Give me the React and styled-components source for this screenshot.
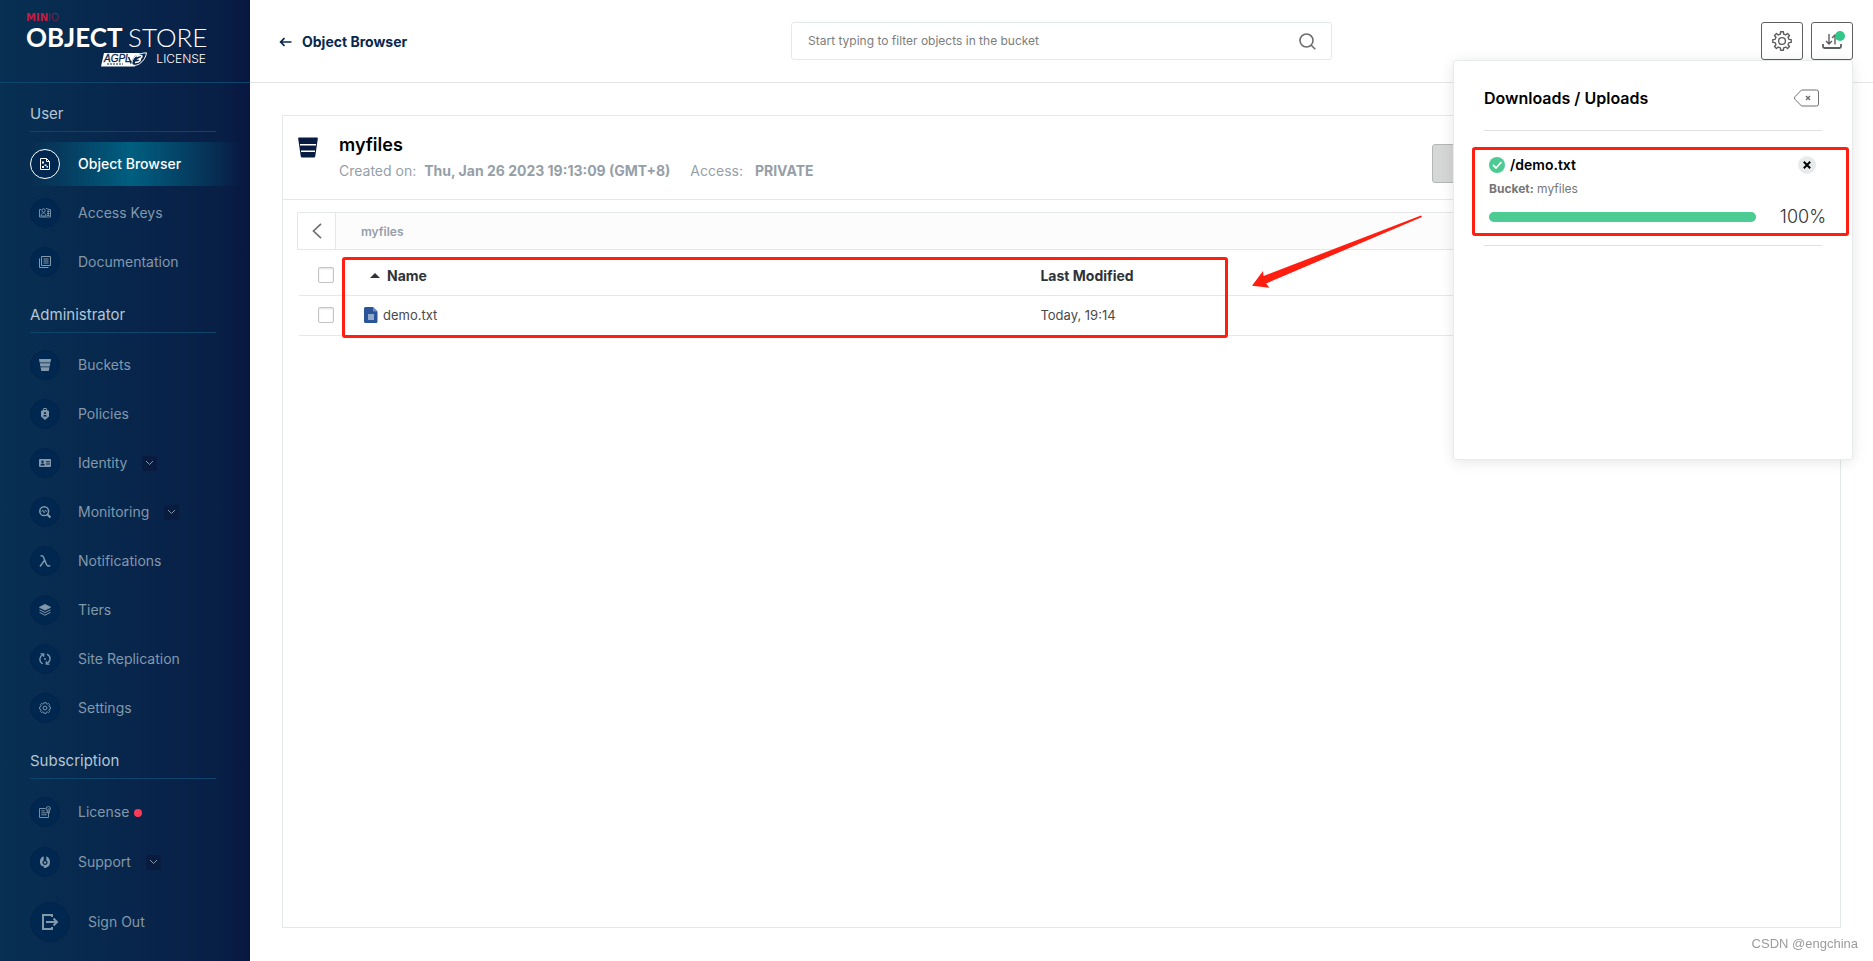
import React from 'react';
import styled, { createGlobalStyle } from 'styled-components';

const GlobalStyle = createGlobalStyle`
  * {
    box-sizing: border-box;
  }

  body {
    margin: 0;
    background-color: #ffffff;
    font-family: Inter, 'Liberation Sans', sans-serif;
    font-size: 14px;
    color: #000000;
  }

  button,
  input {
    font-family: inherit;
  }
`;

const Page = styled.div`
  display: flex;
  min-height: 100vh;
`;

/* Sidebar */

const SideBar = styled.aside`
  flex: 0 0 250px;
  min-width: 0;
  background: linear-gradient(90deg, #073052 0%, #08254b 55%, #081f46 88%, #081740 100%);
`;

const LogoArea = styled.div`
  display: flex;
  flex-direction: column;
  height: 83px;
  padding: 13px 44px 0 26px;
  border-bottom: 1px solid #0f446c;
  color: #ffffff;
`;

const Brand = styled.div`
  font-family: 'DejaVu Sans', sans-serif;
  font-size: 10px;
  line-height: 10px;
  font-weight: 700;
  color: #c51c3f;

  span {
    font-weight: 200;
  }
`;

const Product = styled.div`
  font-family: Lato, 'Liberation Sans', sans-serif;
  font-size: 26px;
  line-height: 28px;
  font-weight: 700;
  white-space: nowrap;

  span {
    font-weight: 300;
  }
`;

const LicenseLine = styled.div`
  display: flex;
  align-items: center;
  justify-content: flex-end;
  gap: 9px;
  height: 16px;
  font-size: 12px;
  line-height: 14px;
  font-weight: 300;
`;

const Nav = styled.nav`
  display: flex;
  flex-direction: column;
`;

const NavGroup = styled.div`
  display: flex;
  flex-direction: column;
  gap: 5px;
`;

const NavTitle = styled.h2`
  height: 49px;
  margin: 0 34px 5px 30px;
  padding-top: 21px;
  border-bottom: 1px solid #0f446c;
  color: #b4c6d4;
  font-size: 15px;
  line-height: 20px;
  font-weight: 400;
`;

const NavItem = styled.a`
  display: flex;
  align-items: center;
  height: ${(props) => props.$height || 44}px;
  padding-left: 30px;
  margin-top: ${(props) => (props.$large ? 7 : 0)}px;
  color: ${(props) => (props.$active ? '#ffffff' : '#8298ab')};
  font-size: 14px;
  line-height: 20px;
  font-weight: ${(props) => (props.$active ? 500 : 400)};
  text-decoration: none;
  background: ${(props) =>
    props.$active
      ? 'linear-gradient(90deg, transparent 12%, #005f80 52%, transparent 96%)'
      : 'none'};
`;

const IconCircle = styled.span`
  display: flex;
  align-items: center;
  justify-content: center;
  width: ${(props) => (props.$large ? 40 : 30)}px;
  height: ${(props) => (props.$large ? 40 : 30)}px;
  margin-right: 18px;
  border: 1px solid ${(props) => (props.$active ? '#ffffff' : '#04234a')};
  border-radius: 50%;
  background-color: #00274f;

  svg {
    width: ${(props) => (props.$large ? 18 : 12)}px;
    height: ${(props) => (props.$large ? 18 : 12)}px;
  }
`;

const Expand = styled.span`
  display: flex;
  align-items: center;
  justify-content: center;
  width: 15px;
  height: 15px;
  margin-left: 15px;
  border-radius: 2px;
  background-color: #0a1b40;
`;

const AlertDot = styled.span`
  width: 8px;
  height: 8px;
  margin: 2px 0 0 5px;
  border-radius: 50%;
  background-color: #ff3958;
`;

/* Header */

const Main = styled.main`
  display: flex;
  flex: 1;
  flex-direction: column;
  min-width: 0;
`;

const TopBar = styled.header`
  display: grid;
  grid-template-columns: repeat(3, 1fr);
  align-items: center;
  height: 83px;
  border-bottom: 1px solid #e5e5e5;
`;

const BackLink = styled.a`
  display: flex;
  align-items: center;
  gap: 10px;
  padding: 2px 0 0 29px;
  color: #07284f;
  font-weight: 700;
  line-height: 20px;
  text-decoration: none;
`;

const SearchBox = styled.label`
  display: flex;
  align-items: center;
  height: 38px;
  padding: 0 15px 0 16px;
  border: 1px solid #e5e8e8;
  border-radius: 3px;
`;

const SearchInput = styled.input`
  flex: 1;
  padding: 0;
  border: none;
  outline: none;
  background: none;
  font-size: 12px;
  line-height: 16px;

  &::placeholder {
    color: #7d7d7d;
    opacity: 1;
  }
`;

const TopActions = styled.div`
  position: relative;
  display: flex;
  justify-content: flex-end;
  gap: 8px;
  padding-right: 20px;
`;

const IconButton = styled.button`
  position: relative;
  display: flex;
  align-items: center;
  justify-content: center;
  width: 42px;
  height: 38px;
  padding: 0;
  border: 1px solid #5c5e60;
  border-radius: 3px;
  background-color: #ffffff;
  color: #5b5d5f;
`;

const ActiveBadge = styled.span`
  position: absolute;
  top: 8px;
  right: 7px;
  width: 10px;
  height: 10px;
  border-radius: 50%;
  background-color: #32c787;
`;

/* Transfers panel */

const TransferPanel = styled.section`
  position: absolute;
  top: 38px;
  right: 20px;
  z-index: 10;
  width: 400px;
  height: 400px;
  padding: 0 30px;
  border: 1px solid #e8ebeb;
  border-radius: 3px;
  background-color: #ffffff;
  box-shadow: 0 2px 14px rgba(0, 0, 0, 0.1);
`;

const PanelHead = styled.div`
  display: flex;
  align-items: center;
  justify-content: space-between;
  height: 70px;
  padding-top: 5px;
  border-bottom: 1px solid #e0e0e0;

  h3 {
    margin: 0;
    font-size: 16px;
    line-height: 20px;
    font-weight: 600;
  }
`;

const PlainButton = styled.button`
  display: flex;
  padding: 0;
  border: none;
  background: none;
  color: #707070;
  margin-right: 2px;
`;

const Transfer = styled.div`
  position: relative;
  height: 115px;
  padding: 24px 0 0 5px;
  border-bottom: 1px solid #e0e0e0;
`;

const TransferName = styled.div`
  display: flex;
  align-items: center;
  gap: 5px;
  padding-right: 6px;
  font-weight: 600;
  line-height: 20px;
`;

const RemoveButton = styled.button`
  display: flex;
  align-items: center;
  justify-content: center;
  width: 18px;
  height: 18px;
  margin-left: auto;
  padding: 0;
  border: none;
  border-radius: 50%;
  background-color: #e8ebeb;
  color: #000000;
`;

const TransferBucket = styled.div`
  margin-top: 5px;
  color: #767676;
  font-size: 12px;
  line-height: 18px;
`;

const ProgressRow = styled.div`
  display: flex;
  align-items: center;
  gap: 24px;
  height: 20px;
  margin: 9px -4px 0 0;
  color: #333333;
  font-size: 18px;
  line-height: 20px;
  font-weight: 300;
`;

const Track = styled.div`
  flex: 1;
  height: 10px;
  border-radius: 5px;
  background-color: #e8ebeb;
`;

const Fill = styled.div`
  height: 10px;
  border-radius: 5px;
  background-color: #4ccb92;
`;

/* Bucket card */

const Card = styled.section`
  position: relative;
  flex: 1;
  margin: 32px 32px 33px;
  border: 1px solid #e5e8e8;
`;

const CardHead = styled.div`
  display: flex;
  align-items: flex-start;
  height: 84px;
  padding: 17px 15px 0;
  border-bottom: 1px solid #e5e8e8;
`;

const BucketMark = styled.div`
  display: flex;
  width: 41px;
  padding-top: 4px;
`;

const BucketName = styled.h1`
  margin: 0;
  font-size: 18px;
  line-height: 24px;
  font-weight: 600;
`;

const BucketMeta = styled.div`
  display: flex;
  gap: 20px;
  margin-top: 4px;
  color: #969fa8;
  line-height: 20px;

  strong {
    margin-left: 8px;
    font-weight: 700;
  }
`;

const BucketActions = styled.div`
  display: flex;
  width: 393px;
  margin-left: auto;
  padding-top: 11px;
`;

const DisabledButton = styled.button`
  width: 110px;
  height: 39px;
  border: 1px solid #b5b7b7;
  border-radius: 3px;
  background-color: #d5d7d7;
`;

const CardBody = styled.div`
  padding: 12px 15px;
`;

const PathBar = styled.div`
  display: flex;
  align-items: center;
  height: 38px;
  border: 1px solid #e5e8e8;
  margin-left: -1px;
  background-color: #fcfcfc;
  color: #969fa8;
  font-size: 12px;
  font-weight: 600;
`;

const PathBack = styled.button`
  display: flex;
  align-items: center;
  justify-content: center;
  width: 38px;
  height: 36px;
  margin-right: 25px;
  padding: 0;
  border: none;
  border-right: 1px solid #e5e8e8;
  background-color: #ffffff;
  color: #707070;
`;

const TableWrap = styled.div`
  position: relative;
  padding-left: 1px;
`;

const Table = styled.table`
  width: 100%;
  table-layout: fixed;
  border-collapse: collapse;
  text-align: left;

  th {
    height: 45px;
    padding: 6px 0 0;
    border-bottom: 1px solid #e5e8e8;
    color: #2f3338;
    font-size: 14px;
    font-weight: 700;
  }

  td {
    height: 40px;
    padding: 0;
    border-bottom: 1px solid #e5e8e8;
    color: #4a4a4a;
    font-size: 13px;
  }
`;

const CheckColumn = styled.col`
  width: 65px;
`;

const NameColumn = styled.col`
  width: 44%;
`;

const Cell = styled.div`
  display: flex;
  align-items: center;
  gap: ${(props) => props.$gap || 0}px;
  padding-left: ${(props) => props.$indent || 0}px;
`;

const CheckBox = styled.input.attrs({ type: 'checkbox' })`
  appearance: none;
  width: 16px;
  height: 16px;
  margin: 0;
  border: 1px solid #c3c4c4;
  border-radius: 2px;
  background-color: #ffffff;
  box-shadow: inset 0 1px 2px rgba(0, 0, 0, 0.12);
`;

/* Marks drawn over the page */

const Highlight = styled.div`
  position: absolute;
  top: ${(props) => props.$top}px;
  left: ${(props) => props.$left}px;
  width: ${(props) => props.$width};
  height: ${(props) => props.$height}px;
  border: 3px solid #ff1e10;
  border-radius: 3px;
  pointer-events: none;
`;

const ArrowMark = styled.svg`
  position: absolute;
  top: 99px;
  right: 417px;
  width: 172px;
  height: 76px;
  pointer-events: none;
`;

const Watermark = styled.div`
  position: fixed;
  right: 15px;
  bottom: 8px;
  color: #9b9b9b;
  font-family: 'Liberation Sans', sans-serif;
  font-size: 13px;
  line-height: 18px;
`;

const gearPath = (c, outer, inner, teeth) => {
  const points = [];
  const step = (Math.PI * 2) / teeth;
  for (let i = 0; i < teeth; i += 1) {
    [
      [-0.3, inner],
      [-0.19, outer],
      [0.19, outer],
      [0.3, inner],
    ].forEach(([offset, r]) => {
      const a = (i + offset) * step;
      points.push(`${(c + r * Math.sin(a)).toFixed(2)} ${(c - r * Math.cos(a)).toFixed(2)}`);
    });
  }
  return `M${points.join('L')}Z`;
};

const icons = {
  browser: (
    <svg viewBox="0 0 12 12" fill="none" stroke="currentColor">
      <path d="M1.5.5h6l3 3v8h-9z" />
      <path d="M7.500.5v3h3" />
      <path d="M3 3.500h2v2H3zM3 8h2v2H3zM5.500 6.500h2v1.500h-2zM7.500 8h1.500v1.500H7.500z" fill="currentColor" stroke="none" />
    </svg>
  ),
  keys: (
    <svg viewBox="0 0 12 12" fill="none" stroke="currentColor" strokeWidth="0.9">
      <path d="M2 2.500H.5v7.500h11V2.500H10M7 1.500h1.500" />
      <circle cx="4.500" cy="3.500" r="1.700" />
      <path d="M2 9c0-2 1-3 2.500-3S7 7 7 9zM8 4.500h2.500M8 6.500h2.500M8 8.500h2.500M9.200 1.500v7" />
    </svg>
  ),
  docs: (
    <svg viewBox="0 0 12 12" fill="none" stroke="currentColor">
      <path d="M2.500.5h9v9h-9zM.5 2.500v9h9M4.500 3h5M4.500 5h5M4.500 7h5" />
    </svg>
  ),
  bucket: (
    <svg viewBox="0 0 12 12" fill="currentColor">
      <path d="M0 0h12l-.5 3.500H.5zM.8 4.300h10.400l-.5 3.200H1.300zM1.600 8.300h8.800L9.800 12H2.200z" />
    </svg>
  ),
  policy: (
    <svg viewBox="0 0 12 12" fill="currentColor" fillRule="evenodd">
      <path d="M4.200 2V.8C4.200.4 4.600 0 5 0h2c.4 0 .8.400.8.8V2L10 3v5.500L6 12 2 8.500V3zM5 1v1h2V1zM6 4a1.100 1.100 0 1 0 0 2.200A1.100 1.100 0 0 0 6 4zM4 8.600h4L7 6.900H5z" />
    </svg>
  ),
  identity: (
    <svg viewBox="0 0 12 12" fill="currentColor" fillRule="evenodd">
      <path d="M1 2h10a1 1 0 0 1 1 1v6a1 1 0 0 1-1 1H1a1 1 0 0 1-1-1V3a1 1 0 0 1 1-1zM3.500 3.500a1.200 1.200 0 1 0 0 2.400 1.200 1.200 0 0 0 0-2.400zM1.500 8.500h4.200c0-2.600-4.200-2.600-4.200 0zM7 4h4v.7H7zM7 5.700h4v.7H7zM7 7.400h4v.7H7z" />
    </svg>
  ),
  monitor: (
    <svg viewBox="0 0 12 12" fill="none" stroke="currentColor">
      <circle cx="5.200" cy="5.200" r="4.400" strokeWidth="1.500" />
      <path d="M2.500 6l1.500-2 1.200 3 1.300-3 1.300 2" strokeWidth="0.8" />
      <path d="M8 8l3.500 3.500" strokeWidth="2.200" />
    </svg>
  ),
  lambda: (
    <svg viewBox="0 0 12 12" fill="none" stroke="currentColor" strokeWidth="1.500">
      <path d="M1.500.8h1.200c1 0 1.400.500 1.800 1.400l3 7.300c.4 1 .9 1.500 1.800 1.500l2-.3M5.800 5L1 11.500" />
    </svg>
  ),
  tiers: (
    <svg viewBox="0 0 12 12" fill="none" stroke="currentColor">
      <path d="M6 .5l5.500 2.800L6 6 .5 3.300z" fill="currentColor" />
      <path d="M.5 5.800L6 8.600l5.500-2.800M.5 8.300L6 11.200l5.500-2.900" />
    </svg>
  ),
  replication: (
    <svg viewBox="0 0 12 12" fill="none" stroke="currentColor" strokeWidth="1.300">
      <path d="M3.800 10.800C-.5 8.500.2 3.500 4.200 1.500M8 1.200c4.400 2.300 3.800 7.300-.2 9.300" />
      <path d="M1.500.8h3.200v3M10.500 11.200H7.300v-3" />
      <circle cx="6" cy="6" r="0.9" fill="currentColor" stroke="none" />
    </svg>
  ),
  settings: (
    <svg viewBox="0 0 12 12" fill="none" stroke="currentColor">
      <path d={gearPath(6, 5.7, 4.6, 8)} />
      <circle cx="6" cy="6" r="1.900" />
    </svg>
  ),
  license: (
    <svg viewBox="0 0 12 12" fill="none" stroke="currentColor" strokeWidth="0.9">
      <path d="M6.500 2.500h-6v9h9V6M2.300 4.800h3.500M2.300 6.800h5.400M2.300 8.800h5.400" />
      <circle cx="9.300" cy="2.700" r="2.200" />
      <path d="M8.300 2.700l.8.800 1.300-1.500M8.300 5v2l1-.6 1 .6V5" />
    </svg>
  ),
  support: (
    <svg viewBox="0 0 12 12" fill="currentColor">
      <path d="M4.700.3C.2 1.600-.2 8 3.200 10.300L4.200 9.500 5 11.700c.5.400 1.500.400 2 0l3-1.800C12 6.500 11 1.500 7.300.3v3.900a2.600 2.600 0 1 1-2.600 0z" />
      <circle cx="6" cy="6.500" r="1.200" />
    </svg>
  ),
  signOut: (
    <svg viewBox="0 0 18 18" fill="none" stroke="currentColor" strokeWidth="2">
      <path d="M11 4V2H2v14h9v-2M5 9h11M12.500 5.500L16 9l-3.500 3.500" />
    </svg>
  ),
};

const navGroups = [
  {
    title: 'User',
    items: [
      { label: 'Object Browser', icon: 'browser', active: true },
      { label: 'Access Keys', icon: 'keys' },
      { label: 'Documentation', icon: 'docs' },
    ],
  },
  {
    title: 'Administrator',
    items: [
      { label: 'Buckets', icon: 'bucket' },
      { label: 'Policies', icon: 'policy' },
      { label: 'Identity', icon: 'identity', expandable: true },
      { label: 'Monitoring', icon: 'monitor', expandable: true },
      { label: 'Notifications', icon: 'lambda' },
      { label: 'Tiers', icon: 'tiers' },
      { label: 'Site Replication', icon: 'replication' },
      { label: 'Settings', icon: 'settings' },
    ],
  },
  {
    title: 'Subscription',
    items: [
      { label: 'License', icon: 'license', alert: true, height: 46 },
      { label: 'Support', icon: 'support', expandable: true },
      { label: 'Sign Out', icon: 'signOut', large: true, height: 52 },
    ],
  },
];

const files = [{ name: 'demo.txt', modified: 'Today, 19:14' }];

const transfers = [{ name: '/demo.txt', bucket: 'myfiles', progress: 100 }];

function AgplBadge() {
  return (
    <svg width="46" height="15" viewBox="0 0 46 15" aria-hidden="true">
      <path d="M3 1h36l-5 13.500H0z" fill="#ffffff" />
      <text
        x="3"
        y="10"
        fill="#0a284d"
        stroke="#0a284d"
        strokeWidth="0.3"
        fontFamily="Liberation Sans, sans-serif"
        fontSize="10"
        fontStyle="italic"
      >
        AGPL
      </text>
      <path d="M6 12h16" stroke="#0a284d" strokeDasharray="2 1" />
      <path d="M27.500 5l2.500 6 5-7" fill="none" stroke="#0a284d" strokeWidth="1.500" />
      <path
        d="M31 10.500C31.500 5 38 1 45.500.8c-.5 4-3 8.500-7 11-3.500 2.200-8 2.200-7.500-1.300z"
        fill="#0a284d"
        stroke="#ffffff"
      />
      <path d="M35.500 4.500c4-2 7-1 4.500 1.500l-2 1c3 .3 1 3.500-4 3.500" fill="none" stroke="#ffffff" strokeWidth="1.500" />
    </svg>
  );
}

function SideNav() {
  return (
    <SideBar>
      <LogoArea>
        <Brand>
          MIN<span>IO</span>
        </Brand>
        <Product>
          OBJECT <span>STORE</span>
        </Product>
        <LicenseLine>
          <AgplBadge />
          LICENSE
        </LicenseLine>
      </LogoArea>
      <Nav>
        {navGroups.map((group) => (
          <NavGroup key={group.title}>
            <NavTitle>{group.title}</NavTitle>
            {group.items.map((item) => (
              <NavItem
                key={item.label}
                href="#"
                $active={item.active}
                $large={item.large}
                $height={item.height}
              >
                <IconCircle $active={item.active} $large={item.large}>
                  {icons[item.icon]}
                </IconCircle>
                {item.label}
                {item.alert && <AlertDot />}
                {item.expandable && (
                  <Expand>
                    <svg width="9" height="6" viewBox="0 0 9 6" fill="none" stroke="currentColor">
                      <path d="M1 1l3.500 3.500L8 1" />
                    </svg>
                  </Expand>
                )}
              </NavItem>
            ))}
          </NavGroup>
        ))}
      </Nav>
    </SideBar>
  );
}

function Transfers() {
  return (
    <TransferPanel>
      <PanelHead>
        <h3>Downloads / Uploads</h3>
        <PlainButton aria-label="Clear completed">
          <svg width="26" height="18" viewBox="0 0 26 18" fill="none" stroke="currentColor">
            <path d="M7.500 1h15a2 2 0 0 1 2 2v12a2 2 0 0 1-2 2h-15L1.200 10.500a2 2 0 0 1 0-3z" />
            <path d="M12 7l4 4M16 7l-4 4" strokeWidth="1.500" />
          </svg>
        </PlainButton>
      </PanelHead>
      {transfers.map((item) => (
        <Transfer key={item.name}>
          <TransferName>
            <svg width="16" height="16" viewBox="0 0 16 16">
              <circle cx="8" cy="8" r="8" fill="#4ccb92" />
              <path d="M4 8l3 3 5.500-6" fill="none" stroke="#ffffff" strokeWidth="1.800" />
            </svg>
            {item.name}
            <RemoveButton aria-label="Remove">
              <svg width="8" height="8" viewBox="0 0 8 8" stroke="currentColor" strokeWidth="2">
                <path d="M.8.8l6.400 6.400M7.200.8L.8 7.200" />
              </svg>
            </RemoveButton>
          </TransferName>
          <TransferBucket>
            <strong>Bucket:</strong> {item.bucket}
          </TransferBucket>
          <ProgressRow>
            <Track>
              <Fill style={{ width: `${item.progress}%` }} />
            </Track>
            {item.progress}%
          </ProgressRow>
          <Highlight $top={16} $left={-12} $width="377px" $height={89} />
        </Transfer>
      ))}
    </TransferPanel>
  );
}

function Header() {
  return (
    <TopBar>
      <BackLink href="#">
        <svg width="13" height="10" viewBox="0 0 13 10" fill="none" stroke="currentColor" strokeWidth="1.700">
          <path d="M12.500 5H2M5.500 1.200L1.600 5l3.900 3.800" />
        </svg>
        Object Browser
      </BackLink>
      <SearchBox>
        <SearchInput
          type="text"
          aria-label="Filter objects"
          placeholder="Start typing to filter objects in the bucket"
        />
        <svg width="17" height="17" viewBox="0 0 17 17" fill="none" stroke="#6c6e70" strokeWidth="1.600">
          <circle cx="7.500" cy="7.500" r="6.500" />
          <path d="M12 12l4.300 4.300" />
        </svg>
      </SearchBox>
      <TopActions>
        <IconButton aria-label="Settings">
          <svg width="20" height="20" viewBox="0 0 20 20" fill="none" stroke="currentColor" strokeWidth="1.400">
            <path d={gearPath(10, 9.3, 7.1, 8)} strokeLinejoin="round" />
            <circle cx="10" cy="10" r="3.400" />
          </svg>
        </IconButton>
        <IconButton aria-label="Downloads and uploads">
          <svg width="20" height="16" viewBox="0 0 20 16" fill="none" stroke="currentColor" strokeWidth="1.400">
            <path d="M1 11v2.500a1.500 1.500 0 0 0 1.500 1.500h15a1.500 1.500 0 0 0 1.500-1.500V11" strokeWidth="1.800" />
            <path d="M7 1v10M4 8l3 3 3-3M13 11.500V2M10 5l3-3 3 3" />
          </svg>
          <ActiveBadge />
        </IconButton>
        <Transfers />
      </TopActions>
    </TopBar>
  );
}

function BucketCard() {
  return (
    <Card>
      <CardHead>
        <BucketMark>
          <svg width="20" height="21" viewBox="0 0 20 21">
            <path d="M1 .5h18a1 1 0 0 1 .8 1.200L17.300 19a1.500 1.500 0 0 1-1.500 1.500H4.200A1.500 1.500 0 0 1 2.700 19L.2 1.700A1 1 0 0 1 1 .5z" fill="#081c42" />
            <path d="M2 7.800h16M3 14.200h14" stroke="#ffffff" strokeWidth="1.500" />
          </svg>
        </BucketMark>
        <div>
          <BucketName>myfiles</BucketName>
          <BucketMeta>
            <span>
              Created on:<strong>Thu, Jan 26 2023 19:13:09 (GMT+8)</strong>
            </span>
            <span>
              Access: <strong>PRIVATE</strong>
            </span>
          </BucketMeta>
        </div>
        <BucketActions>
          <DisabledButton aria-label="Rewind" disabled />
        </BucketActions>
      </CardHead>
      <CardBody>
        <PathBar>
          <PathBack aria-label="Back">
            <svg width="10" height="16" viewBox="0 0 10 16" fill="none" stroke="currentColor" strokeWidth="1.700">
              <path d="M9 .8L1.500 8 9 15.200" />
            </svg>
          </PathBack>
          myfiles
        </PathBar>
        <TableWrap>
          <Table>
            <colgroup>
              <CheckColumn />
              <NameColumn />
              <col />
            </colgroup>
            <thead>
              <tr>
                <th>
                  <Cell $indent={19}>
                    <CheckBox aria-label="Select all" />
                  </Cell>
                </th>
                <th>
                  <Cell $indent={6} $gap={7}>
                    <svg width="10" height="5" viewBox="0 0 10 5">
                      <path d="M0 5l5-5 5 5z" fill="#2f3338" />
                    </svg>
                    Name
                  </Cell>
                </th>
                <th>
                  <Cell $indent={5}>Last Modified</Cell>
                </th>
              </tr>
            </thead>
            <tbody>
              {files.map((file) => (
                <tr key={file.name}>
                  <td>
                    <Cell $indent={19}>
                      <CheckBox aria-label={`Select ${file.name}`} />
                    </Cell>
                  </td>
                  <td>
                    <Cell $gap={5}>
                      <svg width="14" height="16" viewBox="0 0 14 16">
                        <path d="M1.500 0H9l4.500 4.500v10A1.500 1.500 0 0 1 12 16H1.500A1.500 1.500 0 0 1 0 14.500v-13A1.500 1.500 0 0 1 1.500 0z" fill="#2a5597" />
                        <path d="M9 0l4.500 4.500H9z" fill="#6d8dbd" />
                        <path d="M4 8h6M4 10h6M4 12h6" stroke="#b4c5de" strokeWidth="1.300" />
                      </svg>
                      {file.name}
                    </Cell>
                  </td>
                  <td>
                    <Cell $indent={5}>{file.modified}</Cell>
                  </td>
                </tr>
              ))}
            </tbody>
          </Table>
          <Highlight $top={7} $left={44} $width="58%" $height={81} />
        </TableWrap>
      </CardBody>
      <ArrowMark viewBox="0 0 172 76">
        <path d="M170 .5L12.500 61 12 56 1 70.800l17.500 1.900L15 68.500 171 2z" fill="#ff1e10" />
      </ArrowMark>
    </Card>
  );
}

function App() {
  return (
    <Page>
      <GlobalStyle />
      <SideNav />
      <Main>
        <Header />
        <BucketCard />
      </Main>
      <Watermark>CSDN @engchina</Watermark>
    </Page>
  );
}

export default App;
